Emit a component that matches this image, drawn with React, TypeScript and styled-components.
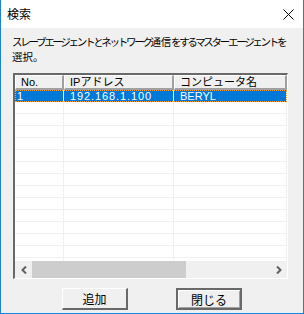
import React from 'react';
import styled, { createGlobalStyle } from 'styled-components';

const Global = createGlobalStyle`
  html, body {
    margin: 0;
    padding: 0;
    background: #ffffff;
  }
  body {
    font-family: "Liberation Sans", "Noto Sans CJK JP", sans-serif;
    font-size: 12px;
    color: #000;
  }
`;

const Window = styled.div`
  width: 304px;
  height: 314px;
  box-sizing: border-box;
  border: 1px solid #1883d7;
  border-top: none;
  display: flex;
  flex-direction: column;
  background: #f0f0f0;
`;

const TitleBar = styled.div`
  height: 28px;
  background: #ffffff;
  display: flex;
  align-items: center;
  justify-content: space-between;
  padding: 0 9px 0 6px;
`;

const Title = styled.span`
  font-family: "Noto Sans CJK JP", sans-serif;
  font-size: 12px;
  line-height: 14px;
`;

const Body = styled.div`
  flex: 1;
  display: flex;
  flex-direction: column;
  padding: 6px 0 0 11px;
`;

const MessageLine = styled.div<{ $tight?: boolean }>`
  font-family: "Noto Sans CJK JP", sans-serif;
  font-size: 10.5px;
  line-height: 15px;
  height: 15px;
  white-space: nowrap;
  letter-spacing: ${p => (p.$tight ? '-2.3px' : '0')};
`;

const Kanji = styled.span`
  letter-spacing: -0.3px;
`;

const ListBox = styled.div`
  margin: 9px 0 0 1px;
  width: 275px;
  height: 206px;
  box-sizing: border-box;
  border-style: solid;
  border-width: 2px 1px 1px 2px;
  border-color: #696969 #ffffff #ffffff #696969;
  background: #ffffff;
  display: flex;
  flex-direction: column;
  overflow: hidden;
`;

const HeaderRow = styled.div`
  display: grid;
  grid-template-columns: 49px 110px 113px;
  height: 15px;
  flex: none;
`;

const HeaderCell = styled.div`
  box-sizing: border-box;
  background: #f0f0f0;
  border-style: solid;
  border-width: 1px 2px 2px 1px;
  border-color: #ffffff #a0a0a0 #a0a0a0 #ffffff;
  padding-left: 5px;
  font-family: "Liberation Sans", "Noto Sans CJK JP", sans-serif;
  font-size: 11px;
  line-height: 12px;
  white-space: nowrap;
  overflow: hidden;
`;

const Rows = styled.div`
  flex: 1;
  overflow: hidden;
`;

const Row = styled.div<{ $selected?: boolean }>`
  display: grid;
  grid-template-columns: 49px 110px 113px;
  height: 12px;
  box-sizing: border-box;
  background: ${p => (p.$selected ? '#0078d7' : '#ffffff')};
  color: ${p => (p.$selected ? '#ffffff' : '#000000')};
  outline: ${p => (p.$selected ? '1px dotted #f7a035' : 'none')};
  outline-offset: -1px;
`;

const Cell = styled.div<{ $selected?: boolean; $pad?: number }>`
  box-sizing: border-box;
  border-right: 1px solid ${p => (p.$selected ? '#ffffff' : '#f0f0f0')};
  border-bottom: 1px solid ${p => (p.$selected ? 'transparent' : '#f0f0f0')};
  padding-left: ${p => p.$pad ?? 2}px;
  font-family: "Liberation Sans", sans-serif;
  font-size: 11px;
  line-height: 12px;
  white-space: nowrap;
  overflow: hidden;
`;

const Spaced = styled.span`
  letter-spacing: 0.9px;
`;

const ScrollBar = styled.div`
  height: 17px;
  flex: none;
  background: #f0f0f0;
  display: flex;
  align-items: center;
`;

const ArrowBtn = styled.div`
  width: 17px;
  height: 17px;
  display: flex;
  align-items: center;
  justify-content: center;
  flex: none;
`;

const Track = styled.div`
  flex: 1;
  height: 17px;
  display: flex;
`;

const Thumb = styled.div`
  height: 17px;
  background: #cdcdcd;
`;

const ButtonRow = styled.div`
  display: flex;
  justify-content: center;
  gap: 48px;
  margin: 9px 0 0 -11px;
`;

const Button = styled.button<{ $default?: boolean }>`
  width: 66px;
  height: 22px;
  box-sizing: border-box;
  margin: 0;
  padding: 0;
  background: #f0f0f0;
  font-family: "Noto Sans CJK JP", sans-serif;
  font-size: 12px;
  color: #000;
  border-style: solid;
  border-width: 1px 2px 2px 1px;
  border-color: #ffffff #696969 #696969 #ffffff;
  ${p =>
    p.$default &&
    `
    border-width: 2px;
    border-color: #696969;
    box-shadow: inset 1px 1px 0 #ffffff, inset -1px -1px 0 #a0a0a0;
  `}
`;

const CloseIcon = () => (
  <svg width="11" height="11" viewBox="0 0 11 11">
    <path d="M0.5 0.5 L10.5 10.5 M10.5 0.5 L0.5 10.5" stroke="#000" strokeWidth="1" />
  </svg>
);

const Chevron = ({ dir }: { dir: 'left' | 'right' }) => (
  <svg width="6" height="8" viewBox="0 0 6 8">
    <path
      d={dir === 'left' ? 'M5 0.5 L1.5 4 L5 7.5' : 'M1 0.5 L4.5 4 L1 7.5'}
      stroke="#606060"
      strokeWidth="2"
      fill="none"
    />
  </svg>
);

const rows = [{ no: '1', ip: '192.168.1.100', name: 'BERYL' }];

const App: React.FC = () => {
  const empty = Array.from({ length: 15 });
  return (
    <>
      <Global />
      <Window>
        <TitleBar>
          <Title>検索</Title>
          <CloseIcon />
        </TitleBar>
        <Body>
          <MessageLine $tight>
            スレーブエージェントとネットワーク<Kanji>通信</Kanji>をするマスターエージェントを
          </MessageLine>
          <MessageLine>選択。</MessageLine>
          <ListBox>
            <HeaderRow>
              <HeaderCell>No.</HeaderCell>
              <HeaderCell>IPアドレス</HeaderCell>
              <HeaderCell>コンピュータ名</HeaderCell>
            </HeaderRow>
            <Rows>
              {rows.map(r => (
                <Row key={r.no} $selected>
                  <Cell $selected>{r.no}</Cell>
                  <Cell $selected $pad={6}>
                    <Spaced>{r.ip}</Spaced>
                  </Cell>
                  <Cell $selected $pad={6}>{r.name}</Cell>
                </Row>
              ))}
              {empty.map((_, i) => (
                <Row key={i}>
                  <Cell />
                  <Cell />
                  <Cell />
                </Row>
              ))}
            </Rows>
            <ScrollBar>
              <ArrowBtn>
                <Chevron dir="left" />
              </ArrowBtn>
              <Track>
                <Thumb style={{ width: 154 }} />
              </Track>
              <ArrowBtn>
                <Chevron dir="right" />
              </ArrowBtn>
            </ScrollBar>
          </ListBox>
          <ButtonRow>
            <Button>追加</Button>
            <Button $default>閉じる</Button>
          </ButtonRow>
        </Body>
      </Window>
    </>
  );
};

export default App;
